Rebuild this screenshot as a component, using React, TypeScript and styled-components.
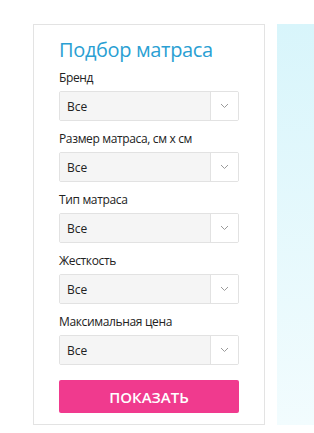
import styled, { createGlobalStyle } from "styled-components";

const GlobalStyle = createGlobalStyle`
  html, body {
    margin: 0;
    padding: 0;
    background: #ffffff;
    overflow: hidden;
  }
  body {
    font-family: "Open Sans", "Liberation Sans", sans-serif;
  }
`;

const Page = styled.div`
  display: flex;
  flex-direction: row;
  align-items: flex-start;
  gap: 12px;
  padding: 24px 0 0 33px;
  width: 100%;
  height: 433px;
  box-sizing: border-box;
`;

const Card = styled.form`
  box-sizing: border-box;
  flex: 0 0 232px;
  height: 401px;
  border: 1px solid #e3e3e3;
  padding: 12px 25px 0 25px;
  display: flex;
  flex-direction: column;
`;

const Title = styled.h2`
  margin: 0 0 7px 0;
  font-size: 20px;
  font-weight: 400;
  line-height: 26px;
  letter-spacing: -0.35px;
  color: #2a9fd3;
`;

const Field = styled.div`
  display: flex;
  flex-direction: column;
  margin-bottom: 10px;
`;

const Label = styled.label`
  font-size: 12px;
  line-height: 16px;
  letter-spacing: -0.35px;
  color: #222;
  margin-bottom: 5px;
`;

const Select = styled.div`
  display: flex;
  height: 30px;
  box-sizing: border-box;
  border: 1px solid #e2e2e2;
  border-radius: 2px;
  overflow: hidden;
`;

const Value = styled.div`
  flex: 1;
  background: #f5f5f5;
  font-size: 12px;
  color: #222;
  display: flex;
  align-items: center;
  padding-left: 7px;
`;

const Arrow = styled.div`
  width: 27px;
  border-left: 1px solid #e2e2e2;
  background: #fff;
  display: flex;
  align-items: center;
  justify-content: center;
`;

const Button = styled.button`
  margin-top: 5px;
  height: 33px;
  border: none;
  border-radius: 2px;
  background: #f03a8e;
  color: #fff;
  font-family: "Open Sans", "Liberation Sans", sans-serif;
  font-size: 15px;
  font-weight: 600;
  cursor: pointer;
`;

const Banner = styled.div`
  flex: 1;
  height: 401px;
  background: linear-gradient(to bottom, #d8f5fb 0%, #f2fcfe 100%);
`;

const fields = [
  "Бренд",
  "Размер матраса, см x см",
  "Тип матраса",
  "Жесткость",
  "Максимальная цена",
];

const Chevron = () => (
  <svg width="9" height="6" viewBox="0 0 9 6">
    <path d="M1 1 L4.5 4.5 L8 1" fill="none" stroke="#9a9a9a" strokeWidth="1" />
  </svg>
);

export default function App() {
  return (
    <>
      <GlobalStyle />
      <Page>
        <Card>
          <Title>Подбор матраса</Title>
          {fields.map((f) => (
            <Field key={f}>
              <Label>{f}</Label>
              <Select>
                <Value>Все</Value>
                <Arrow>
                  <Chevron />
                </Arrow>
              </Select>
            </Field>
          ))}
          <Button type="button">ПОКАЗАТЬ</Button>
        </Card>
        <Banner />
      </Page>
    </>
  );
}
